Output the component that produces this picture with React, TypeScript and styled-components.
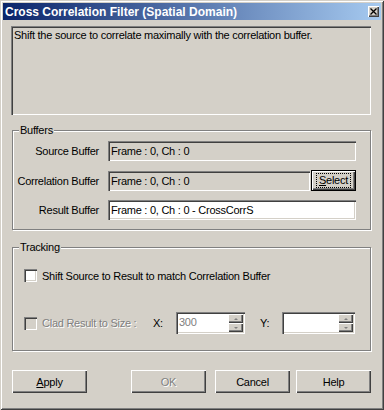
import React from 'react';
import styled, { createGlobalStyle, css } from 'styled-components';

const face = '#d4d0c8';

const GlobalStyle = createGlobalStyle`
	html, body {
		margin: 0;
		padding: 0;
		background: ${face};
	}
	* {
		box-sizing: border-box;
	}
`;

const raised = css`
	box-shadow: inset 1px 1px #fff, inset -1px -1px #404040, inset -2px -2px #808080;
`;

const sunken = css`
	box-shadow: inset 1px 1px #808080, inset 2px 2px #404040, inset -1px -1px #fff, inset -2px -2px ${face};
`;

const Window = styled.div`
	width: 384px;
	height: 410px;
	padding: 3px;
	background: ${face};
	box-shadow: inset 1px 1px ${face}, inset -1px -1px #404040, inset 2px 2px #fff, inset -2px -2px #808080;
	display: flex;
	flex-direction: column;
	font-family: "Liberation Sans", Arial, sans-serif;
	font-size: 11px;
	letter-spacing: -0.25px;
	color: #000;
`;

const TitleBar = styled.div`
	height: 17px;
	display: flex;
	align-items: center;
	justify-content: space-between;
	padding: 0 2px 0 2px;
	background: linear-gradient(to right, #0a246a, #a6caf0);
`;

const Title = styled.span`
	color: #fff;
	font-weight: bold;
	font-size: 12px;
	letter-spacing: 0;
	white-space: nowrap;
`;

const CloseButton = styled.div`
	width: 11px;
	height: 11px;
	background: ${face};
	${raised};
	display: flex;
	align-items: center;
	justify-content: center;
`;

const Body = styled.div`
	display: flex;
	flex-direction: column;
	padding: 6px 10px 0 9px;
`;

const Description = styled.div`
	height: 89px;
	margin-left: -1px;
	padding: 3px 3px;
	${sunken};
	line-height: 13px;
`;

const GroupBox = styled.div<{ $top: number; $bottom: number }>`
	margin-top: ${p => p.$top}px;
	padding-bottom: ${p => p.$bottom}px;
	border: 1px solid #808080;
	box-shadow: inset 1px 1px #fff, 1px 1px #fff;
	display: flex;
	flex-direction: column;
`;

const GroupLabel = styled.span`
	align-self: flex-start;
	margin: -7px 0 0 6px;
	padding: 0 1px;
	line-height: 13px;
	background: ${face};
`;

const BufferGrid = styled.div`
	margin: 4px 12px 0 0;
	display: grid;
	grid-template-columns: 86px 1fr;
	column-gap: 9px;
	row-gap: 9px;
	align-items: center;
`;

const FieldLabel = styled.span`
	text-align: right;
	white-space: nowrap;
`;

const Field = styled.div<{ $white?: boolean }>`
	flex: 1;
	height: 20px;
	padding: 0 3px;
	display: flex;
	align-items: center;
	background: ${p => (p.$white ? '#fff' : face)};
	${sunken};
	white-space: nowrap;
`;

const FieldRow = styled.div`
	display: flex;
	align-items: center;
	gap: 1px;
	padding-right: 2px;
`;

const Button = styled.div<{ $width: number; $height: number; $default?: boolean; $disabled?: boolean; $left?: number }>`
	width: ${p => p.$width}px;
	height: ${p => p.$height}px;
	margin-left: ${p => p.$left ?? 0}px;
	flex-shrink: 0;
	display: flex;
	align-items: center;
	justify-content: center;
	background: ${face};
	color: ${p => (p.$disabled ? '#808080' : '#000')};
	text-shadow: ${p => (p.$disabled ? '1px 1px #fff' : 'none')};
	${p =>
		p.$default
			? css`
					border: 1px solid #000;
					box-shadow: inset 1px 1px #fff, inset -1px -1px #404040, inset -2px -2px #808080;
			  `
			: raised};
`;

const FocusText = styled.span`
	outline: 1px dotted #000;
	outline-offset: 0px;
	padding: 0 2px;
	line-height: 13px;
`;

const Row = styled.div<{ $top: number }>`
	display: flex;
	align-items: center;
	margin-top: ${p => p.$top}px;
	padding-left: 11px;
`;

const CheckBox = styled.div<{ $disabled?: boolean }>`
	width: 13px;
	height: 13px;
	flex-shrink: 0;
	background: ${p => (p.$disabled ? face : '#fff')};
	${sunken};
`;

const CheckLabel = styled.span<{ $disabled?: boolean; $width?: number }>`
	margin-left: 5px;
	white-space: nowrap;
	width: ${p => (p.$width ? `${p.$width}px` : 'auto')};
	color: ${p => (p.$disabled ? '#808080' : '#000')};
	text-shadow: ${p => (p.$disabled ? '1px 1px #fff' : 'none')};
`;

const AxisLabel = styled.span<{ $width: number; $left?: number }>`
	width: ${p => p.$width}px;
	margin-left: ${p => p.$left ?? 0}px;
`;

const SpinBox = styled.div<{ $width: number }>`
	width: ${p => p.$width}px;
	height: 22px;
	padding: 2px;
	background: #fff;
	${sunken};
	display: flex;
`;

const SpinText = styled.span`
	flex: 1;
	padding-left: 1px;
	color: #808080;
	line-height: 16px;
`;

const SpinButtons = styled.div`
	width: 15px;
	display: flex;
	flex-direction: column;
`;

const SpinButton = styled.div`
	flex: 1;
	background: ${face};
	${raised};
	display: flex;
	align-items: center;
	justify-content: center;
`;

const Arrow = styled.span<{ $up?: boolean }>`
	width: 0;
	height: 0;
	border-left: 2px solid transparent;
	border-right: 2px solid transparent;
	${p => (p.$up ? 'border-bottom: 2px solid #808080;' : 'border-top: 2px solid #808080;')}
`;

const ButtonRow = styled.div`
	display: flex;
	margin-top: 19px;
`;

function Spin({ width, value }: { width: number; value?: string }) {
	return (
		<SpinBox $width={width}>
			<SpinText>{value}</SpinText>
			<SpinButtons>
				<SpinButton>
					<Arrow $up />
				</SpinButton>
				<SpinButton>
					<Arrow />
				</SpinButton>
			</SpinButtons>
		</SpinBox>
	);
}

export default function App() {
	return (
		<>
			<GlobalStyle />
			<Window>
				<TitleBar>
					<Title>Cross Correlation Filter (Spatial Domain)</Title>
					<CloseButton>
						<svg width="7" height="7" viewBox="0 0 7 7">
							<path d="M0.5 0.5 L6.5 6.5 M6.5 0.5 L0.5 6.5" stroke="#000" strokeWidth="1.3" />
						</svg>
					</CloseButton>
				</TitleBar>
				<Body>
					<Description>Shift the source to correlate maximally with the correlation buffer.</Description>

					<GroupBox $top={15} $bottom={9}>
						<GroupLabel>Buffers</GroupLabel>
						<BufferGrid>
							<FieldLabel>Source Buffer</FieldLabel>
							<FieldRow>
								<Field>Frame : 0, Ch : 0</Field>
							</FieldRow>
							<FieldLabel>Correlation Buffer</FieldLabel>
							<FieldRow>
								<Field>Frame : 0, Ch : 0</Field>
								<Button $width={45} $height={21} $default>
									<FocusText>
										<u>S</u>elect
									</FocusText>
								</Button>
							</FieldRow>
							<FieldLabel>Result Buffer</FieldLabel>
							<FieldRow>
								<Field $white>Frame : 0, Ch : 0 - CrossCorrS</Field>
							</FieldRow>
						</BufferGrid>
					</GroupBox>

					<GroupBox $top={17} $bottom={16}>
						<GroupLabel>Tracking</GroupLabel>
						<Row $top={15}>
							<CheckBox />
							<CheckLabel>Shift Source to Result to match Correlation Buffer</CheckLabel>
						</Row>
						<Row $top={30}>
							<CheckBox $disabled />
							<CheckLabel $disabled $width={111}>
								Clad Result to Size :
							</CheckLabel>
							<AxisLabel $width={23}>X:</AxisLabel>
							<Spin width={69} value="300" />
							<AxisLabel $width={22} $left={15}>
								Y:
							</AxisLabel>
							<Spin width={73} />
						</Row>
					</GroupBox>

					<ButtonRow>
						<Button $width={75} $height={23}>
							<span>
								<u>A</u>pply
							</span>
						</Button>
						<Button $width={75} $height={23} $left={44} $disabled>
							OK
						</Button>
						<Button $width={75} $height={23} $left={9}>
							Cancel
						</Button>
						<Button $width={75} $height={23} $left={6}>
							Help
						</Button>
					</ButtonRow>
				</Body>
			</Window>
		</>
	);
}
